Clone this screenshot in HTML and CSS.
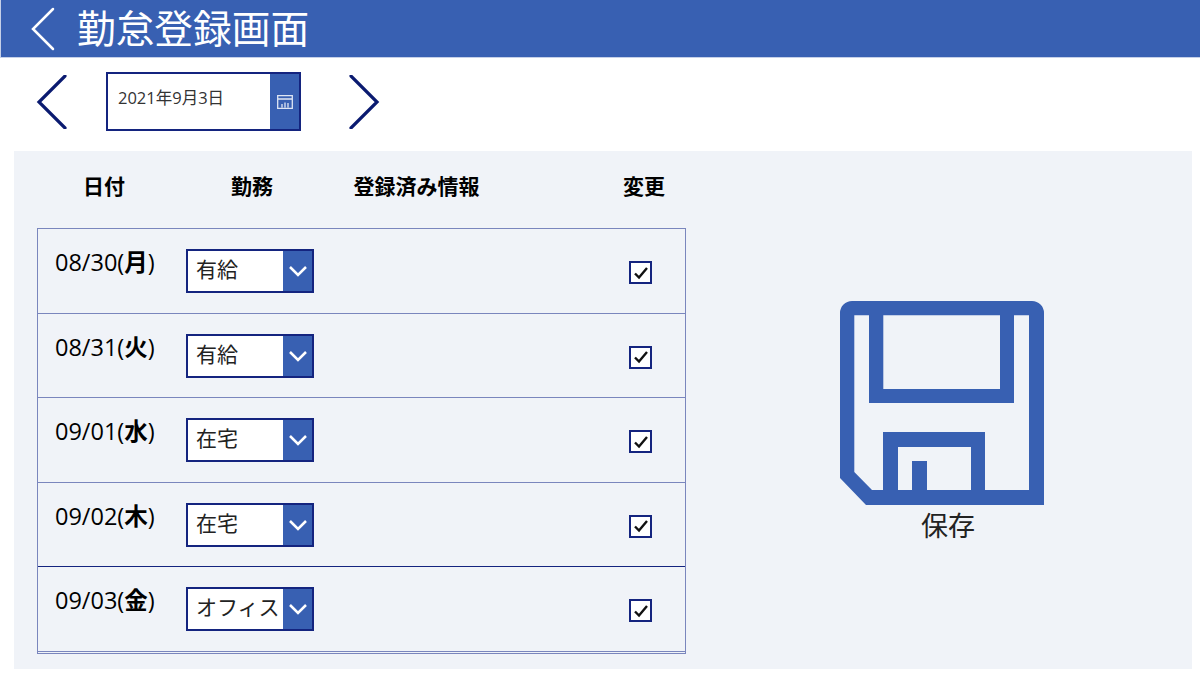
FILE: index.html
```html
<!DOCTYPE html>
<html lang="ja">
<head>
  <meta charset="UTF-8">
  <title>勤怠登録画面</title>
  <link rel="stylesheet" href="styles.css">
</head>
<body>

<!-- ヘッダー -->
<div class="header">
  <svg class="back" width="26" height="44" viewBox="0 0 26 44"><path d="M23 2 3 22l20 20" /></svg>
  <h1>勤怠登録画面</h1>
</div>

<!-- 日付選択 -->
<div class="date-bar">
  <svg class="arrow" width="32" height="54" viewBox="0 0 32 54"><path d="M29 1 3 27l26 26" /></svg>
  <div class="date-input">
    <span class="date-text">2021年9月3日</span>
    <div class="date-btn">
      <svg width="16" height="14" viewBox="0 0 16 14"><path d="M.7.7h14.6v12.6H.7zM.7 4h14.6M5 12.5V9M8 12.5V7.500M11 12.500V8" /></svg>
    </div>
  </div>
  <svg class="arrow arrow-next" width="32" height="54" viewBox="0 0 32 54"><path d="M3 1l26 26L3 53" /></svg>
</div>

<div class="panel">
  <div class="left">
    <div class="head">
      <div>日付</div>
      <div>勤務</div>
      <div>登録済み情報</div>
      <div></div>
      <div>変更</div>
    </div>

    <div class="list">
      <div class="row">
        <div class="day">08/30(<b>月</b>)</div>
        <div class="select"><span>有給</span><div class="select-btn"><svg width="20" height="12" viewBox="0 0 20 12"><path d="M2 2l8 8 8-8" /></svg></div></div>
        <div class="check"><svg width="16" height="14" viewBox="0 0 16 14"><path d="M2 7.500l4 4 8-9.500" /></svg></div>
      </div>
      <div class="row">
        <div class="day">08/31(<b>火</b>)</div>
        <div class="select"><span>有給</span><div class="select-btn"><svg width="20" height="12" viewBox="0 0 20 12"><path d="M2 2l8 8 8-8" /></svg></div></div>
        <div class="check"><svg width="16" height="14" viewBox="0 0 16 14"><path d="M2 7.500l4 4 8-9.500" /></svg></div>
      </div>
      <div class="row">
        <div class="day">09/01(<b>水</b>)</div>
        <div class="select"><span>在宅</span><div class="select-btn"><svg width="20" height="12" viewBox="0 0 20 12"><path d="M2 2l8 8 8-8" /></svg></div></div>
        <div class="check"><svg width="16" height="14" viewBox="0 0 16 14"><path d="M2 7.500l4 4 8-9.500" /></svg></div>
      </div>
      <div class="row">
        <div class="day">09/02(<b>木</b>)</div>
        <div class="select"><span>在宅</span><div class="select-btn"><svg width="20" height="12" viewBox="0 0 20 12"><path d="M2 2l8 8 8-8" /></svg></div></div>
        <div class="check"><svg width="16" height="14" viewBox="0 0 16 14"><path d="M2 7.500l4 4 8-9.500" /></svg></div>
      </div>
      <div class="row row-selected">
        <div class="day">09/03(<b>金</b>)</div>
        <div class="select"><span>オフィス</span><div class="select-btn"><svg width="20" height="12" viewBox="0 0 20 12"><path d="M2 2l8 8 8-8" /></svg></div></div>
        <div class="check"><svg width="16" height="14" viewBox="0 0 16 14"><path d="M2 7.500l4 4 8-9.500" /></svg></div>
      </div>
    </div>
  </div>

  <!-- 保存ボタン -->
  <div class="save">
    <svg width="204" height="204" viewBox="0 0 204 204">
      <path fill-rule="evenodd" d="M12 0H192A12 12 0 0 1 204 12V204H26L0 177V12A12 12 0 0 1 12 0ZM14.300 14.300V171L32 189H43V131H145V189H189V14.300H174V102H29V14.300ZM43.300 14.300V88H160V14.300ZM58 146V189H72V160H87V189H131V146Z" />
    </svg>
    <div class="save-label">保存</div>
  </div>
</div>

</body>
</html>
```

FILE: styles.css
```css
body {
  margin: 0;
  background: #fff;
  font-family: 'Open Sans', 'Noto Sans CJK JP', sans-serif;
  color: #000;
}
svg {
  display: block;
  fill: none;
}
.header {
  height: 57px;
  background: #3860b2;
  border-bottom: 1px solid #c5d0e8;
  border-left: 1px solid #c5d0e8;
  display: flex;
  align-items: center;
  padding-left: 29px;
}
.back path {
  stroke: #fff;
  stroke-width: 2.500;
  stroke-linecap: round;
}
h1 {
  margin: 0 0 0 21px;
  font-size: 38.700px;
  font-weight: 400;
  color: #fff;
  line-height: 57px;
}
.date-bar {
  height: 93px;
  display: flex;
  align-items: flex-start;
  padding-left: 36px;
  box-sizing: border-box;
  padding-top: 14px;
}
.arrow {
  margin-top: 3px;
}
.arrow path {
  stroke: #0a1a70;
  stroke-width: 3.200;
  stroke-linecap: round;
}
.arrow-next {
  margin-left: 47px;
}
.date-input {
  margin-left: 38px;
  width: 195px;
  height: 59px;
  box-sizing: border-box;
  border: 2px solid #14247f;
  background: #fff;
  display: flex;
}
.date-text {
  flex: 1;
  padding: 13px 0 0 10px;
  font-size: 16.500px;
  line-height: 22px;
  color: #333;
}
.date-btn {
  width: 29px;
  background: #3860b2;
  display: flex;
  align-items: center;
  justify-content: center;
}
.date-btn path {
  stroke: #dfe6f4;
  stroke-width: 1.300;
}
.panel {
  margin: 0 8px 0 14px;
  height: 518px;
  background: #f0f3f8;
  display: flex;
}
.left {
  width: 672px;
  padding-left: 23px;
  flex: none;
  box-sizing: border-box;
}
.head {
  height: 77px;
  display: grid;
  grid-template-columns: 134px 162px 167px 104px 80px;
  align-items: center;
  padding-bottom: 10px;
  box-sizing: border-box;
  font-size: 21px;
  font-weight: 700;
  text-align: center;
}
.list {
  width: 649px;
  height: 426px;
  box-sizing: border-box;
  border: 1px solid #7a86bd;
  border-bottom: 3px double #7a86bd;
}
.row {
  height: 84.500px;
  box-sizing: border-box;
  border-bottom: 1px solid #7a86bd;
  display: flex;
  align-items: flex-start;
  padding: 20px 33px 0 17px;
}
.row:nth-child(4) {
  border-bottom-color: #14247f;
}
.row-selected {
  border-bottom: none;
}
.day {
  width: 131px;
  font-size: 23.500px;
  line-height: 27px;
  white-space: nowrap;
}
.day b {
  font-weight: 700;
}
.select {
  width: 128px;
  height: 44px;
  box-sizing: border-box;
  border: 2px solid #14247f;
  background: #fff;
  display: flex;
  font-size: 21px;
  line-height: 36px;
  color: #222;
}
.select span {
  flex: 1;
  padding-left: 8px;
  white-space: nowrap;
  overflow: hidden;
}
.select-btn {
  width: 29px;
  flex: none;
  background: #3860b2;
  display: flex;
  align-items: center;
  justify-content: center;
}
.select-btn path {
  stroke: #fff;
  stroke-width: 2.500;
}
.check {
  margin: 12px 0 0 auto;
  width: 23px;
  height: 23px;
  box-sizing: border-box;
  border: 2px solid #14247f;
  background: #fff;
  display: flex;
  align-items: center;
  justify-content: center;
}
.check path {
  stroke: #111;
  stroke-width: 2.400;
}
.save {
  margin-left: 154px;
  padding-top: 150px;
  width: 204px;
  text-align: center;
}
.save path {
  fill: #3860b2;
}
.save-label {
  font-size: 27px;
  line-height: 40px;
  margin-top: 1px;
  padding-left: 12px;
  color: #222;
}
```
